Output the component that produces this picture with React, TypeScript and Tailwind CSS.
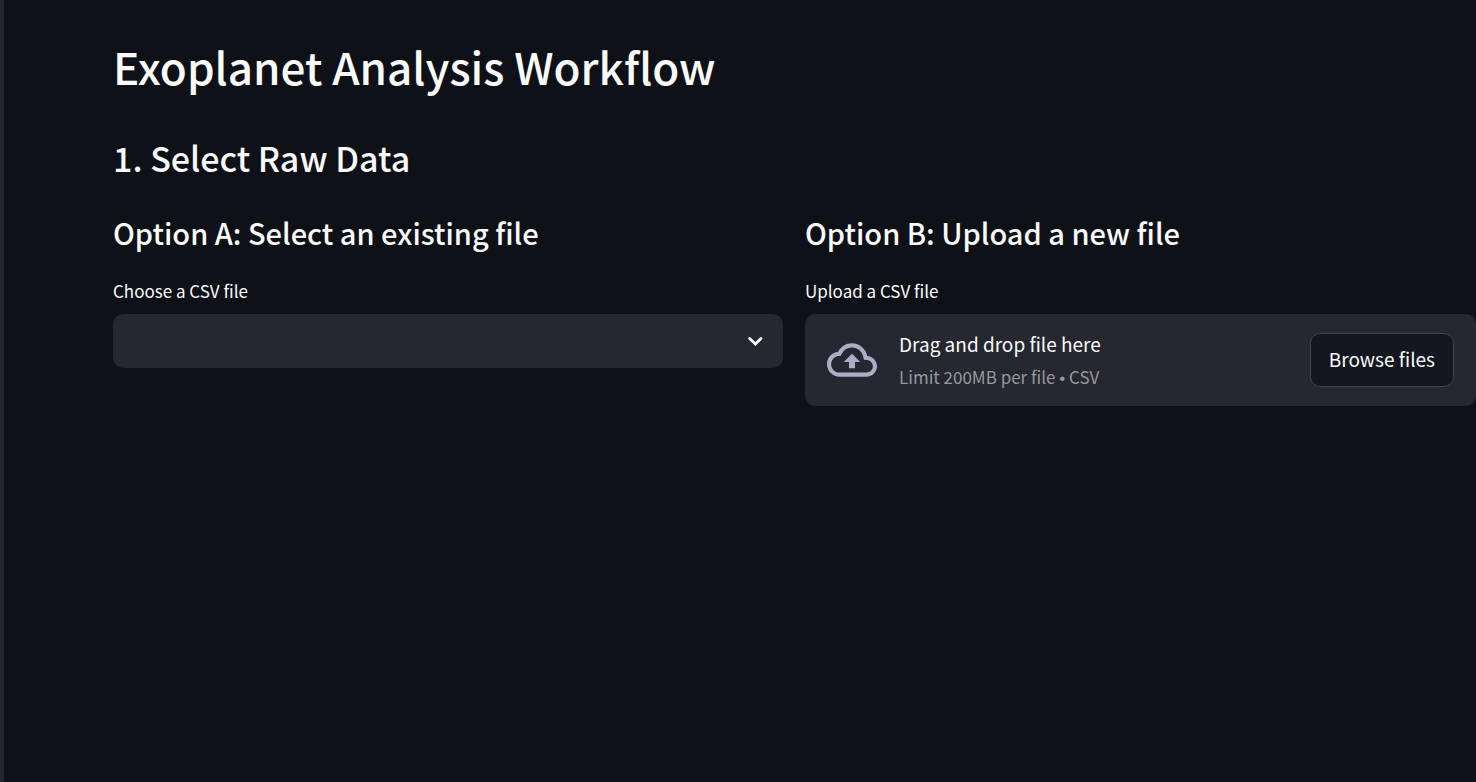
import { MdOutlineCloudUpload } from "react-icons/md";

export default function App() {
  return (
    <div className="flex min-h-screen bg-[#0e1117] font-['Noto_Sans_CJK_SC',sans-serif] text-[#fafafa]">
      <aside aria-label="Sidebar" className="w-1 shrink-0 bg-[#262730]" />
      <main className="min-w-0 flex-1 pt-9 pl-[109px]">
        <h1 className="text-[44px] leading-[60px] font-medium">Exoplanet Analysis Workflow</h1>
        <h2 className="mt-[34px] text-[34px] leading-[56px] font-medium">1. Select Raw Data</h2>
        <div className="mt-6 grid grid-cols-[670fr_671fr] gap-[22px]">
          <section>
            <h3 className="text-[29px] leading-[44px] font-medium">Option A: Select an existing file</h3>
            <label htmlFor="existing-file" className="mt-[25px] block text-[17px] leading-6">
              Choose a CSV file
            </label>
            <div className="mt-[11px] grid items-center">
              <select
                id="existing-file"
                className="col-start-1 row-start-1 h-[54px] w-full appearance-none rounded-[10px] bg-[#262730] px-4 text-[19px]"
              />
              <svg
                viewBox="0 0 24 24"
                className="pointer-events-none col-start-1 row-start-1 mr-4 size-6 justify-self-end"
                fill="none"
                stroke="currentColor"
                strokeWidth="2.8"
                strokeLinecap="round"
                aria-hidden="true"
              >
                <path d="M6.6 9.5 12.400 15l5.600-5.500" />
              </svg>
            </div>
          </section>
          <section>
            <h3 className="text-[29px] leading-[44px] font-medium">Option B: Upload a new file</h3>
            <p id="upload-label" className="mt-[25px] text-[17px] leading-6">
              Upload a CSV file
            </p>
            <div
              role="group"
              aria-labelledby="upload-label"
              className="mt-[11px] flex h-[92px] items-center rounded-[10px] bg-[#262730] px-[22px]"
            >
              <MdOutlineCloudUpload className="mr-[22px] size-[50px] shrink-0 text-[#a9afc4]" aria-hidden="true" />
              <div className="flex-1">
                <p className="text-[19px] leading-9">Drag and drop file here</p>
                <p className="text-[17px] leading-[30px] text-[#97989d]">
                  Limit 200MB per file <span className="font-['Liberation_Sans',sans-serif]">•</span> CSV
                </p>
              </div>
              <button
                type="button"
                className="h-[54px] rounded-[10px] border border-[#41434b] bg-[#131720] px-[18px] pb-0.5 text-[19px]"
              >
                Browse files
              </button>
            </div>
          </section>
        </div>
      </main>
    </div>
  );
}
